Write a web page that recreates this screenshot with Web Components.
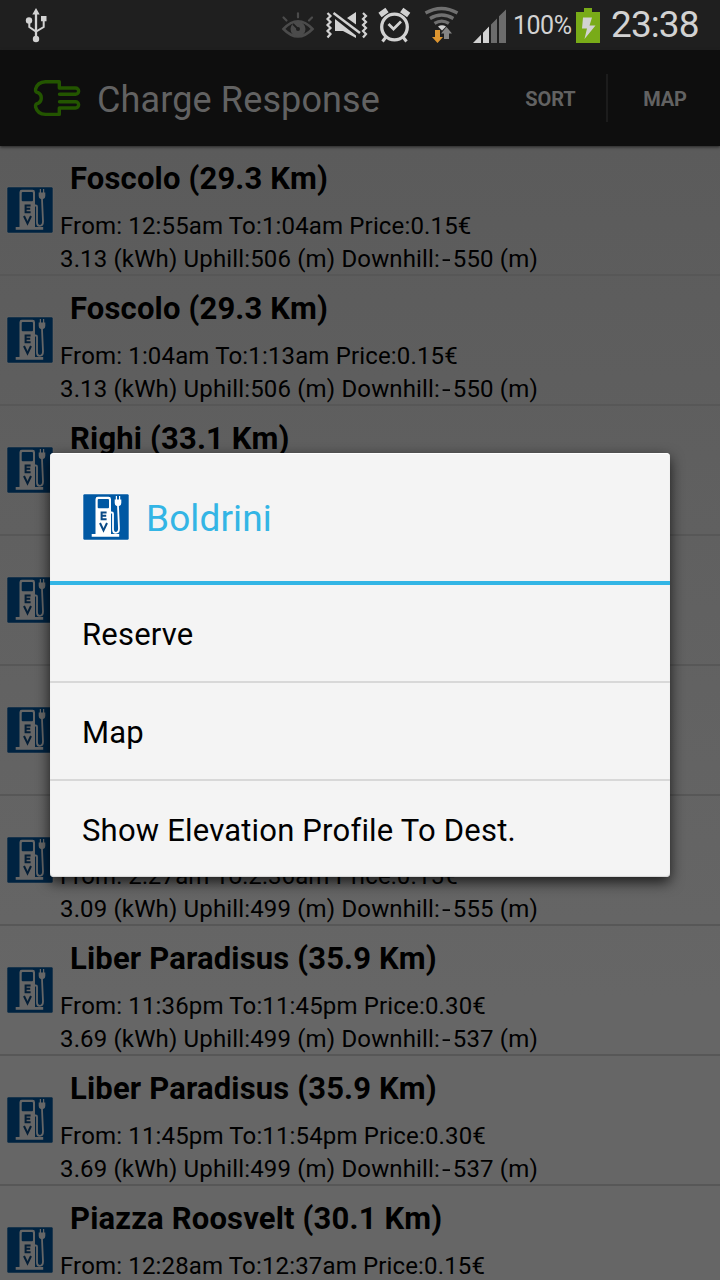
<!DOCTYPE html>
<html lang="en">
<head>
<meta charset="utf-8">
<title>Charge Response</title>
<style>
html,body{margin:0;padding:0;height:1280px;overflow:hidden;background:#0e0e0e;font-family:Roboto,"Noto Sans",sans-serif;font-variant-ligatures:none}
</style>
</head>
<body>
<charge-app></charge-app>
<script>
function define(name, html, init) {
  const t = document.createElement('template');
  t.innerHTML = html;
  customElements.define(name, class extends HTMLElement {
    constructor() {
      super();
      this.attachShadow({mode: 'open'}).append(t.content.cloneNode(true));
    }
    connectedCallback() { if (init) init(this, this.shadowRoot); }
  });
}

define('ev-icon', `
<style>:host{display:block;width:48px;height:48px;flex:none}svg{display:block}</style>
<svg width="48" height="48" viewBox="0 0 48 48">
  <rect x=".5" y=".5" width="47" height="47" rx="2" fill="#fff" opacity=".65"/>
  <rect x="1.3" y="1.3" width="45.4" height="45.4" rx="1.2" fill="#0058a3"/>
  <path fill="#fff" d="M9.700 43.700v-2.700h3.800V6.200q0-2.400 2.400-2.400h10.700q2.400 0 2.400 2.400V41h8.200v2.700z"/>
  <rect x="15.700" y="6" width="11.300" height="9.200" rx="1" fill="#0058a3"/>
  <path d="M24.600 19.400h-5v6.800h5M19.600 22.800h4.600M18 30l3.500 7.500L25 30" fill="none" stroke="#0a4a86" stroke-width="2"/>
  <path d="M28.500 19.500h1.300q1.200 0 1.200 1.200V36.500q0 3.300 2.700 3.300 3.300 0 3.300-4.300L36 13" fill="none" stroke="#fff" stroke-width="1.800"/>
  <path d="M32.700 6.500h6.600v3.500q0 2.300-2.100 3h-2.400q-2.100-.7-2.100-3zM33.800 3h1.200v4h-1.200zM37 3h1.200v4H37z" fill="#fff"/>
</svg>`);

define('status-bar', `
<style>
:host{display:flex;height:50px;background:#1f1f1f;color:#d2d2d2;align-items:center;box-sizing:border-box}
svg{display:block;flex:none}
.sp{flex:1}
.pct{font-size:25px;width:62px;margin-left:7px;line-height:50px;padding-top:1px;letter-spacing:-.5px;white-space:nowrap}
.time{font-size:37px;width:109px;margin-left:10px;line-height:50px;white-space:nowrap;letter-spacing:-.9px}
</style>
<svg width="60" height="50" viewBox="0 0 60 50"><g fill="none" stroke="#d2d2d2" stroke-width="2"><path d="M36 12v26" stroke-width="2.300"/><path d="M29.300 21v6l6.700 4.500 7.700-4.500v-7"/></g><path fill="#d2d2d2" d="M36 8l3.700 6.500h-7.400zM41 16h5.500v5.300H41z"/><circle cx="29" cy="20.500" r="3.200" fill="#d2d2d2"/><circle cx="36" cy="39" r="3.200" fill="#d2d2d2"/></svg>
<span class="sp"></span>
<svg width="236" height="50" viewBox="270 0 236 50">
  <g stroke="#4b4b4b" stroke-width="2.200" fill="none" stroke-linecap="round"><path d="M283.500 17.500l3 3M298 13.300v4M312 17.500l-3 3"/><path d="M283.500 29q14.500-15.500 29 0q-14.500 15-29 0z" stroke-width="2.600"/></g>
  <circle cx="298" cy="29" r="7.500" fill="#4b4b4b"/><circle cx="298" cy="29" r="2" fill="#1f1f1f"/><path d="M293 24l5 5" stroke="#1f1f1f" stroke-width="1.800"/>
  <path fill="#d2d2d2" d="M335 19l21 16.500V38l-13-7h-8zM347 18l9-6v12.500z"/>
  <path d="M333.500 13l26.500 20" stroke="#1f1f1f" stroke-width="5"/>
  <path d="M333.500 13l26.500 20" stroke="#d2d2d2" stroke-width="2.400"/>
  <path fill="none" stroke="#d2d2d2" stroke-width="2.200" d="M327.500 13l3 3-3 3 3 3-3 3 3 3-3 3 3 3-3 3.500M363 13l3 3-3 3 3 3-3 3 3 3-3 3 3 3-3 3.500"/>
  <g fill="none" stroke="#d2d2d2"><circle cx="394.500" cy="27" r="12.800" stroke-width="3.300"/><path d="M388.500 24l5 5 7.500-7.500" stroke-width="2.700"/><path d="M380 15l7-5M408.700 15l-7-5" stroke-width="5.500"/><path d="M386 37l-3.500 4.500M403 37l3.500 4.500" stroke-width="3"/></g>
  <g fill="none" stroke="#707070" stroke-width="3.300"><path d="M425.500 13q16-9 32 0"/><path d="M430 18.500q11.700-7 23.400 0"/><path d="M434.500 23.300q7.200-4.500 14.400 0"/></g>
  <path d="M438 26.500q4-2.500 8 0l-4 4z" fill="#d2d2d2"/>
  <path d="M435 30h5v7h3l-5.500 6-5.500-6h3z" fill="#dd9530"/>
  <path d="M446.500 27l5.500 6.500h-3V39h-5v-5.500h-3z" fill="#858585"/>
  <path d="M473 43l8-8.200V43zM483 32.800l6-6.300V43h-6z" fill="#d2d2d2"/><path d="M491 24.500l6-6V43h-6zM499 16.300l7-6.800V43h-7z" fill="#6c6c6c"/>
</svg>
<span class="pct">100%</span>
<svg width="26" height="50" viewBox="575 0 26 50"><path fill="#79ab18" d="M576 12h8V8h8v4h8v31h-24z"/><path fill="#d2d2d2" d="M583 17.500h9l-2.500 8h6L584.500 39l2.500-10.500h-5z"/></svg>
<span class="time">23:38</span>`);

define('action-button', `
<style>:host{display:flex;align-items:center;justify-content:center;height:96px;box-sizing:border-box;padding:2px 0 0 2px;font-weight:700;font-size:20px;color:#626262;letter-spacing:-.1px}</style><slot></slot>`);

define('action-bar', `
<style>
:host{display:flex;height:96px;align-items:center;background:#0e0e0e;box-sizing:border-box;box-shadow:0 1px 3px #222;position:relative}
svg{display:block;margin-left:32px;flex:none}
h1{margin:0 0 0 15px;padding-top:4px;flex:1;font-weight:400;font-size:36px;line-height:50px;color:#626262;white-space:nowrap;letter-spacing:.13px}
i{width:2px;height:48px;background:#1c1c1c}
.a{width:113px}.b{width:112px}
</style>
<svg width="50" height="40" viewBox="32 78 50 40"><path d="M59.500 94.300h16a3 3 0 0 0 0-6.300H59.300V81.700H45.500Q37.500 82 35.600 89q-.6 3.300 2.400 3.600Q41.300 94 41.300 98t-3.300 5.400q-3 .3-2.400 3.600Q37.500 114.200 45.500 114.400h13.800V108h16.200a3 3 0 0 0 0-6.300h-16" fill="none" stroke="#235500" stroke-width="3.400" stroke-linecap="round" stroke-linejoin="round"/></svg>
<h1><slot></slot></h1>
<action-button class="a">SORT</action-button><i></i><action-button class="b">MAP</action-button>`);

define('station-row', `
<style>
:host{display:flex;height:130px;box-sizing:border-box;border-bottom:2px solid #575757;align-items:center;padding-left:6px;color:#000}
ev-icon{filter:brightness(.4)}
.t{flex:1;align-self:stretch;padding:12px 0 0 6px}
h2{margin:0 0 0 10px;font-size:31px;line-height:42px;height:42px;font-weight:700;white-space:nowrap;letter-spacing:.16px}
p{margin:0;font-size:24px;line-height:33px;height:33px;white-space:nowrap;letter-spacing:.15px}
.f{margin-top:10px}
.m{display:inline-block;transform:scaleX(1.3);transform-origin:0 50%;margin:0 4px 0 2px}
</style>
<ev-icon></ev-icon><div class="t"><h2><slot></slot></h2><p class="f"></p><p class="e"></p></div>`,
(el, root) => {
  root.querySelector('.f').textContent = el.getAttribute('time') || '';
  root.querySelector('.e').innerHTML = (el.getAttribute('energy') || '').replace('-', '<span class="m">-</span>');
});

define('dialog-item', `
<style>:host{display:flex;align-items:center;box-sizing:border-box;height:98px;padding:2px 0 0 32px;font-size:31px;color:#000;border-top:2px solid #d8d8d8;letter-spacing:.2px}
:host(:first-of-type){border-top:0;height:96px}</style><slot></slot>`);

define('choice-dialog', `
<style>
:host{display:block;position:absolute;left:50px;top:453px;width:620px;height:424px;background:#f4f4f4;border-radius:4px;box-shadow:0 5px 14px rgba(0,0,0,.75),inset 0 -1px 1px #d5d5d5,inset 0 1px 0 #fff;overflow:hidden}
header{display:flex;align-items:center;height:128px;border-bottom:4px solid #33b5e5;padding-left:32px;color:#33b5e5;font-size:37px;gap:16px}
::slotted(span){padding-top:2px;letter-spacing:.1px}
</style>
<header><ev-icon></ev-icon><slot name="title"></slot></header><slot></slot>`);

define('charge-app', `
<style>
:host{display:block;width:720px;height:1280px;position:relative;overflow:hidden}
main{height:1134px;overflow:hidden;background:linear-gradient(#5b5b5b,#666 75%)}
</style>
<status-bar></status-bar>
<action-bar>Charge Response</action-bar>
<main>
<station-row time="From: 12:55am To:1:04am Price:0.15€" energy="3.13 (kWh) Uphill:506 (m) Downhill:-550 (m)">Foscolo (29.3 Km)</station-row>
<station-row time="From: 1:04am To:1:13am Price:0.15€" energy="3.13 (kWh) Uphill:506 (m) Downhill:-550 (m)">Foscolo (29.3 Km)</station-row>
<station-row>Righi (33.1 Km)</station-row>
<station-row></station-row>
<station-row></station-row>
<station-row time="From: 2:27am To:2:36am Price:0.15€" energy="3.09 (kWh) Uphill:499 (m) Downhill:-555 (m)"></station-row>
<station-row time="From: 11:36pm To:11:45pm Price:0.30€" energy="3.69 (kWh) Uphill:499 (m) Downhill:-537 (m)">Liber Paradisus (35.9 Km)</station-row>
<station-row time="From: 11:45pm To:11:54pm Price:0.30€" energy="3.69 (kWh) Uphill:499 (m) Downhill:-537 (m)">Liber Paradisus (35.9 Km)</station-row>
<station-row time="From: 12:28am To:12:37am Price:0.15€">Piazza Roosvelt (30.1 Km)</station-row>
</main>
<choice-dialog><span slot="title">Boldrini</span><dialog-item>Reserve</dialog-item><dialog-item>Map</dialog-item><dialog-item>Show Elevation Profile To Dest.</dialog-item></choice-dialog>`);
</script>
</body>
</html>
